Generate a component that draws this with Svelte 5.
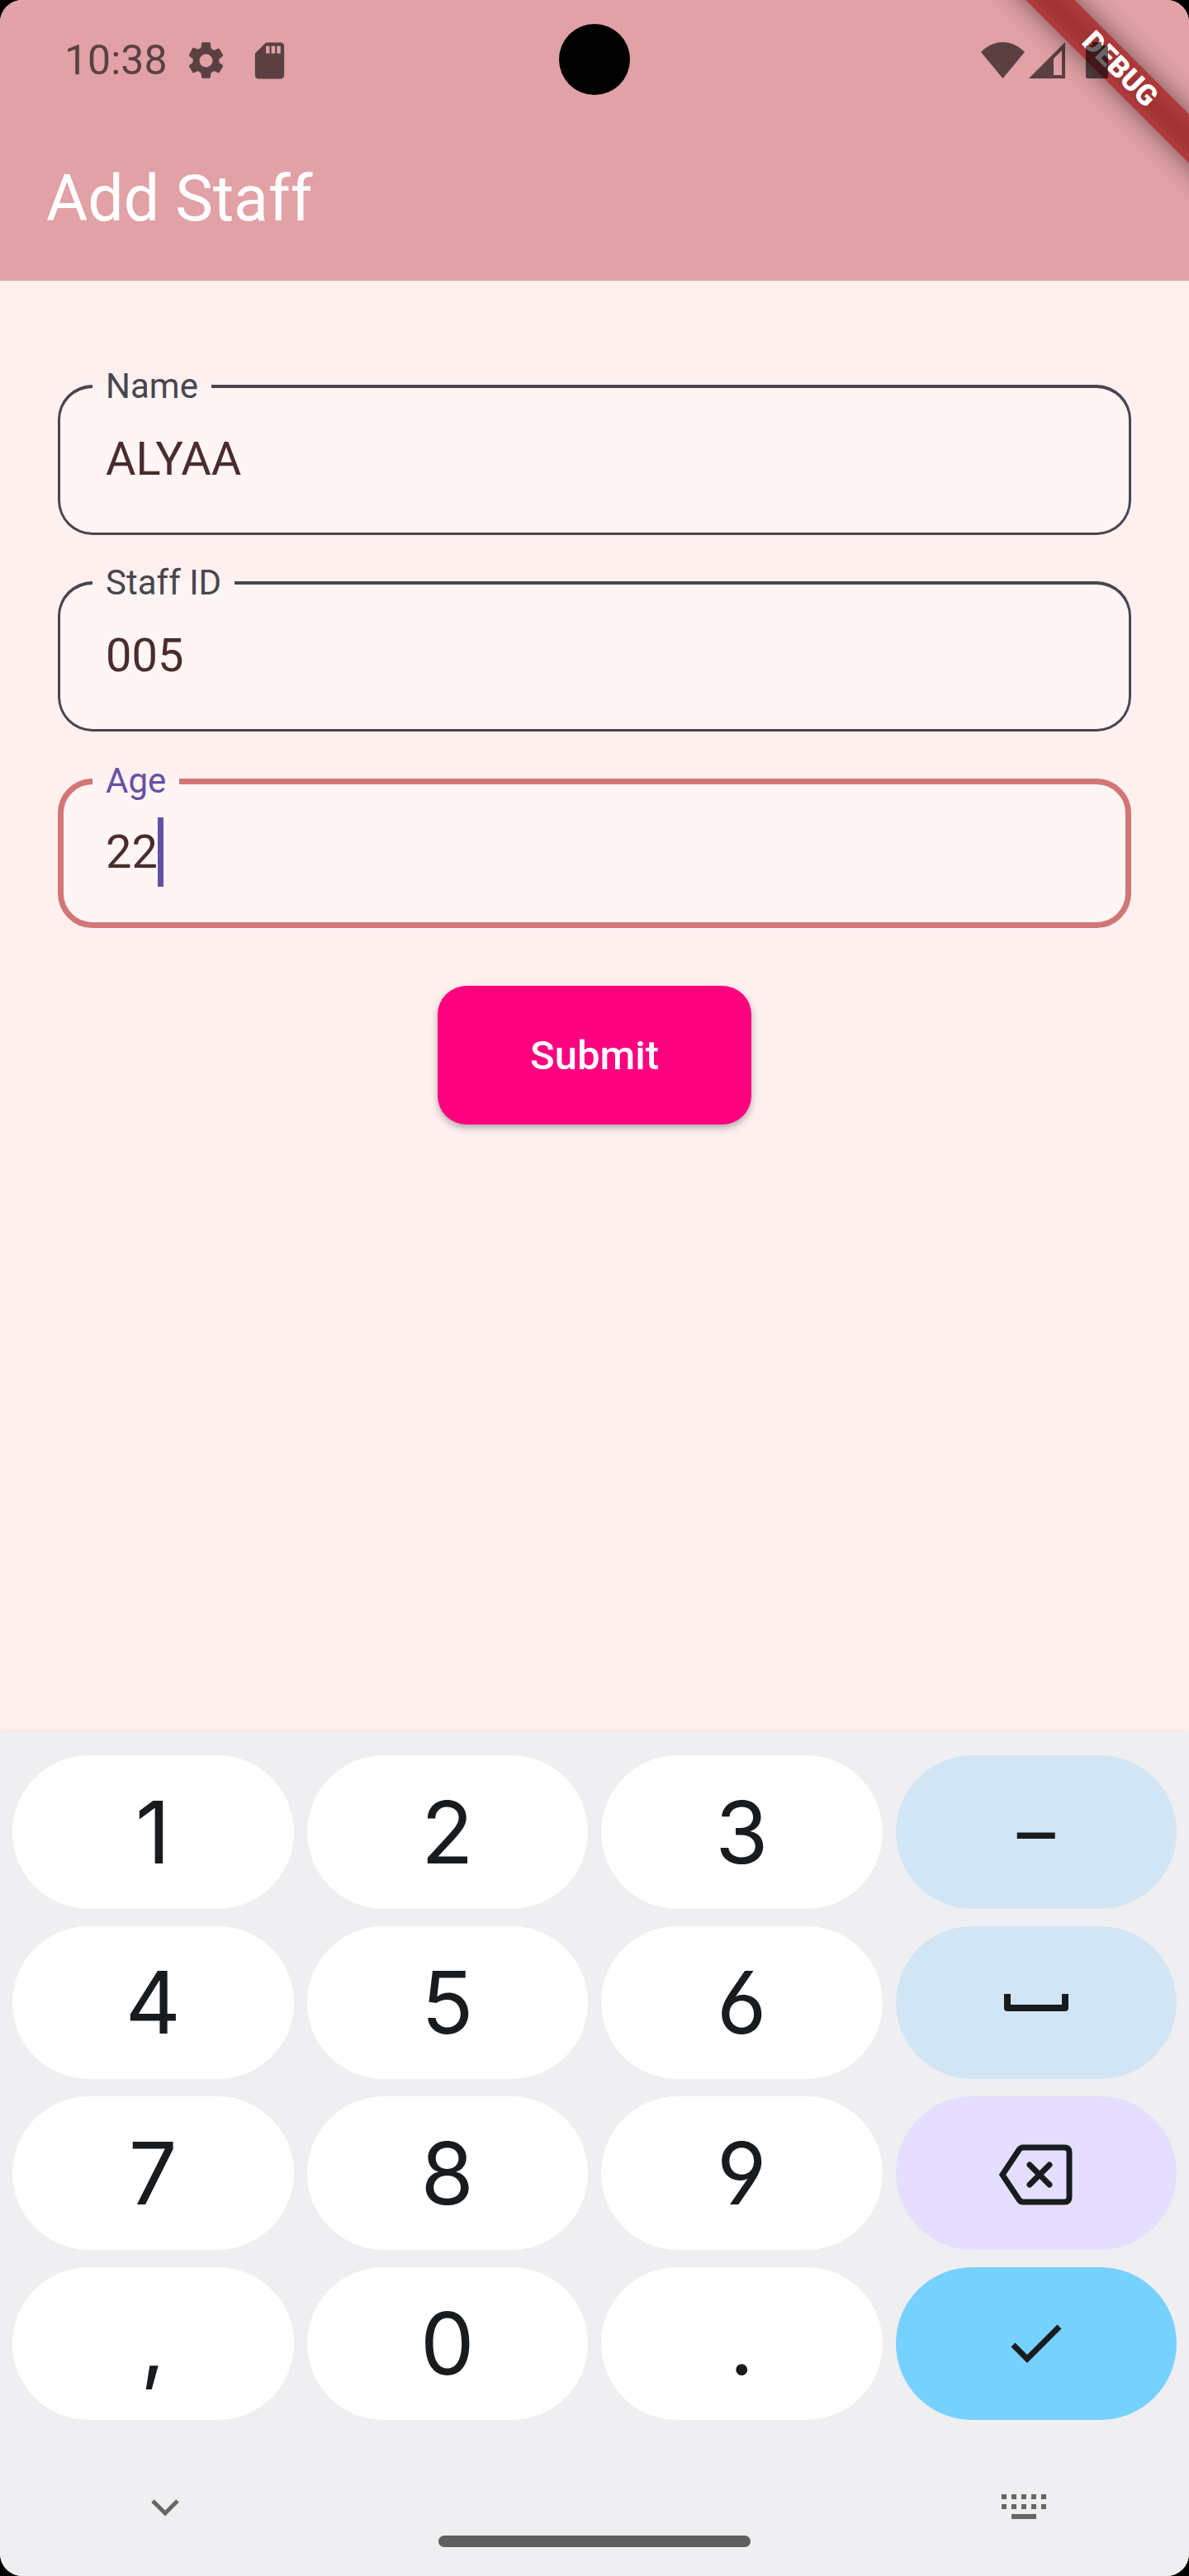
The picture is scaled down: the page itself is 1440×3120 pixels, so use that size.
<script>
  let fields = $state([
    { id: 'name', label: 'Name', value: 'ALYAA', focused: false },
    { id: 'staff-id', label: 'Staff ID', value: '005', focused: false },
    { id: 'age', label: 'Age', value: '22', focused: true }
  ]);

  const keys = [
    { text: '1' }, { text: '2' }, { text: '3' }, { text: '–', tone: 'soft' },
    { text: '4' }, { text: '5' }, { text: '6' }, { icon: 'space', label: 'Space', tone: 'soft' },
    { text: '7' }, { text: '8' }, { text: '9' }, { icon: 'backspace', label: 'Backspace', tone: 'erase' },
    { text: ',' }, { text: '0' }, { text: '.' }, { icon: 'check', label: 'Done', tone: 'done' }
  ];

  function press(key) {
    const age = fields[2];
    if (key.text) age.value += key.text;
    else if (key.icon === 'space') age.value += ' ';
    else if (key.icon === 'backspace') age.value = age.value.slice(0, -1);
  }
</script>

<div class="phone">
  <header class="app-bar">
    <div class="ribbon">DEBUG</div>
    <div class="status">
      <span class="time">10:38</span>
      <div class="notices">
        <svg class="icon" viewBox="0 0 24 24" aria-hidden="true">
          <path d="M19.14 12.94c.04-.3.06-.61.06-.94 0-.32-.02-.64-.07-.94l2.03-1.58a.49.49 0 0 0 .12-.61l-1.92-3.32a.49.49 0 0 0-.59-.22l-2.39.96c-.5-.38-1.03-.7-1.62-.94L14.4 2.3a.48.48 0 0 0-.48-.41h-3.84a.47.47 0 0 0-.47.41l-.36 2.54c-.59.24-1.13.57-1.62.94l-2.39-.96a.48.48 0 0 0-.59.22L2.74 8.87a.47.47 0 0 0 .12.61l2.03 1.58c-.05.3-.09.63-.09.94s.02.64.07.94l-2.03 1.58a.49.49 0 0 0-.12.61l1.92 3.32c.12.22.37.29.59.22l2.39-.96c.5.38 1.03.7 1.62.94l.36 2.54c.05.24.24.41.48.41h3.84c.24 0 .44-.17.47-.41l.36-2.54c.59-.24 1.13-.56 1.62-.94l2.39.96c.22.08.47 0 .59-.22l1.92-3.32a.47.47 0 0 0-.12-.61l-2.01-1.58zM12 15.6A3.6 3.6 0 1 1 12 8.4a3.6 3.6 0 0 1 0 7.2z" />
        </svg>
        <svg class="icon" viewBox="0 0 24 24" aria-hidden="true">
          <path d="M18 2h-8L4.02 8 4 20c0 1.1.9 2 2 2h12c1.100 0 2-.9 2-2V4c0-1.100-.9-2-2-2zm-6 6h-2V4h2v4zm3 0h-2V4h2v4zm3 0h-2V4h2v4z" />
        </svg>
      </div>
      <div class="signals">
        <svg class="wifi" viewBox="0 0 53 44" aria-hidden="true">
          <path d="M26.500 44 0 12C8 4 17 0 26.500 0S45 4 53 12z" />
        </svg>
        <svg class="cell" viewBox="0 0 44 44" aria-hidden="true">
          <path fill-rule="evenodd" d="M44 0v44H0zM40 10 30 20v20h10z" />
        </svg>
        <svg class="battery" viewBox="0 0 56 44" aria-hidden="true">
          <path d="M28 0h11v4h6q2 0 2 2v36q0 2-2 2H22q-2 0-2-2V6q0-2 2-2h6z" />
        </svg>
      </div>
    </div>
    <h1>Add Staff</h1>
    <div class="camera"></div>
  </header>

  <main>
    <form onsubmit={(e) => e.preventDefault()}>
      {#each fields as field (field.id)}
        <fieldset class:focused={field.focused}>
          <legend><label for={field.id}>{field.label}</label></legend>
          <div class="entry">
            <input id={field.id} type="text" autocomplete="off" bind:value={field.value} />
            {#if field.focused}<span class="caret"></span>{/if}
          </div>
        </fieldset>
      {/each}
      <button class="submit" type="submit">Submit</button>
    </form>
  </main>

  <section class="keyboard" aria-label="Number keyboard">
    <div class="keys">
      {#each keys as key}
        <button type="button" class="key {key.tone ?? ''}" aria-label={key.label} onclick={() => press(key)}>
          {#if key.text}
            {key.text}
          {:else if key.icon === 'space'}
            <svg class="glyph" viewBox="0 0 96 96" aria-hidden="true">
              <path d="M13 42v13h70V42" stroke-width="8" stroke-linejoin="round" stroke-linecap="square" />
            </svg>
          {:else if key.icon === 'backspace'}
            <svg class="glyph" viewBox="0 0 96 96" aria-hidden="true">
              <path d="M32 17h50q6 0 6 6v54q0 6-6 6H32q-3 0-5-3L7 50l20-30q2-3 5-3z" stroke-width="7" />
              <path d="M40 38l24 24M64 38 40 62" stroke-width="7" stroke-linecap="round" />
            </svg>
          {:else}
            <svg class="glyph" viewBox="0 0 96 96" aria-hidden="true">
              <path d="M20 50l17 17 39-39" stroke-width="7" />
            </svg>
          {/if}
        </button>
      {/each}
    </div>
    <nav>
      <div class="nav-row">
        <button type="button" class="nav-button" aria-label="Hide keyboard">
          <svg viewBox="0 0 64 64" aria-hidden="true">
            <path d="M17 24l15 15 15-15" fill="none" stroke="#666" stroke-width="5" />
          </svg>
        </button>
        <button type="button" class="nav-button" aria-label="Switch keyboard">
          <svg viewBox="0 0 64 64" aria-hidden="true">
            <g fill="none" stroke="#666" stroke-width="6">
              <path d="M5 19h54" stroke-dasharray="6 6" />
              <path d="M5 31h54" stroke-dasharray="6 6" />
              <path d="M17 43h30" />
            </g>
          </svg>
        </button>
      </div>
      <div class="home"></div>
    </nav>
  </section>
</div>

<style>
  :global(body) {
    margin: 0;
    background: #000;
  }

  .phone {
    display: flex;
    flex-direction: column;
    min-height: 100vh;
    overflow: hidden;
    border-radius: 27px;
    background: #fff0f0;
    font-family: Roboto, sans-serif;
  }

  button {
    border: 0;
    margin: 0;
    padding: 0;
    font-family: inherit;
    cursor: pointer;
  }

  .app-bar {
    position: relative;
    overflow: hidden;
    padding-bottom: 4px;
    background: #e1a1a6;
  }

  .status {
    position: relative;
    display: flex;
    align-items: center;
    height: 146px;
    padding: 0 89px 0 78px;
    color: rgba(0, 0, 0, 0.6);
  }

  .status svg {
    display: block;
    height: 44px;
    fill: currentColor;
  }

  .time {
    font-size: 50px;
    line-height: 56px;
  }

  .notices {
    display: flex;
    gap: 24px;
    margin-left: 20px;
  }

  .status .icon {
    width: 53px;
    height: 53px;
  }

  .signals {
    display: flex;
    gap: 5px;
    margin-left: auto;
  }

  .wifi {
    width: 53px;
  }

  .cell {
    width: 44px;
  }

  .battery {
    width: 56px;
  }

  h1 {
    margin: 0;
    padding: 0 56px;
    color: #fff;
    font-size: 77px;
    font-weight: 400;
    line-height: 190px;
  }

  .camera {
    position: absolute;
    top: 29px;
    left: 50%;
    width: 86px;
    height: 86px;
    margin-left: -43px;
    border-radius: 50%;
    background: #000;
  }

  .ribbon {
    position: absolute;
    top: 63px;
    right: -166px;
    width: 500px;
    transform: rotate(45deg);
    background: linear-gradient(#b13b3e, #a13333 40%, #a13333 60%, #b13b3e);
    box-shadow: 0 0 32px rgba(0, 0, 0, 0.5);
    color: #fff;
    font-size: 35px;
    font-weight: 900;
    line-height: 42px;
    text-align: center;
  }

  main {
    flex: 1;
    padding: 100px 70px 70px;
  }

  form {
    display: flex;
    flex-direction: column;
    gap: 30px;
  }

  fieldset {
    min-width: 0;
    margin: 0;
    padding: 18px 55px 47px 55px;
    border: 3px solid #49454f;
    border-top-width: 4px;
    border-radius: 42px;
    background: #fff5f4;
  }

  legend {
    margin-left: -16px;
    padding: 0 16px;
    color: #49454f;
    font-size: 42px;
    line-height: 56px;
  }

  .entry {
    display: flex;
    height: 84px;
  }

  input {
    flex: 1;
    min-width: 0;
    padding: 0;
    border: 0;
    outline: 0;
    background: transparent;
    color: #4a2c2c;
    font-family: inherit;
    font-size: 56px;
    line-height: 84px;
  }

  .focused {
    padding: 14px 51px 43px 51px;
    border: 7px solid #d27676;
  }

  .focused legend {
    color: #6750a4;
    line-height: 60px;
  }

  .focused input {
    flex: none;
    field-sizing: content;
    caret-color: transparent;
  }

  .caret {
    width: 7px;
    background: #6750a4;
  }

  .submit {
    align-self: center;
    height: 168px;
    margin-top: 40px;
    padding: 0 112px;
    border-radius: 35px;
    background: #ff007f;
    box-shadow: 0 4px 8px rgba(0, 0, 0, 0.3);
    color: #fff;
    font-size: 49px;
    font-weight: 500;
  }

  .keyboard {
    background: #efeff1;
    box-shadow: 0 0 8px rgba(0, 0, 0, 0.09);
  }

  .keys {
    display: grid;
    grid-template-columns: repeat(4, 1fr);
    grid-template-rows: repeat(4, 1fr);
    gap: 21px 16px;
    height: 805px;
    padding: 28px 15px 0;
  }

  .key {
    display: flex;
    align-items: center;
    justify-content: center;
    border-radius: 93px;
    background: #fff;
    color: #191c1e;
    font-family: Inter, Roboto, sans-serif;
    font-feature-settings: 'cv03', 'cv04';
    font-size: 104px;
    line-height: 120px;
  }

  .soft {
    background: #d2e5f4;
    font-size: 92px;
  }

  .erase {
    background: #e5deff;
  }

  .done {
    background: #76d1ff;
  }

  .glyph {
    width: 96px;
    height: 96px;
    fill: none;
    stroke: #191c1e;
  }

  nav {
    padding: 74px 0 35px;
  }

  .nav-row {
    display: flex;
    justify-content: space-between;
    padding: 0 168px;
  }

  .nav-button {
    width: 64px;
    height: 64px;
    background: none;
  }

  .nav-button svg {
    display: block;
  }

  .home {
    width: 378px;
    height: 14px;
    margin: 2px auto 0;
    border-radius: 7px;
    background: #5f5f5f;
  }
</style>
